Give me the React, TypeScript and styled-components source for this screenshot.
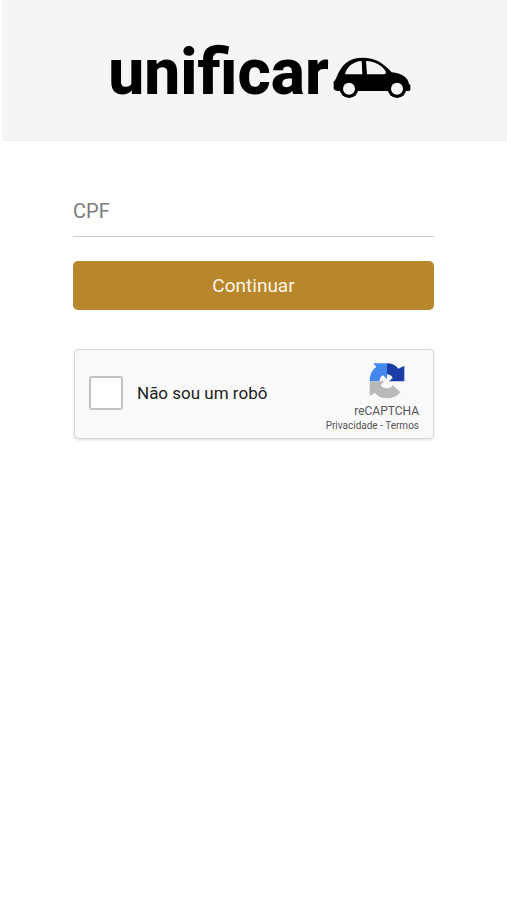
import React, { useState } from "react";
import styled, { createGlobalStyle } from "styled-components";

const GlobalStyle = createGlobalStyle`
  *, *::before, *::after { box-sizing: border-box; }
  body {
    margin: 0;
    background: #fff;
    font-family: Roboto, "Liberation Sans", sans-serif;
  }
`;

const Header = styled.header`
  display: flex;
  align-items: center;
  justify-content: center;
  height: 141px;
  margin-left: 2px;
  padding: 6px 0 0 10px;
  background: #f5f5f5;
  border-bottom: 1px solid #eee;
`;

const Brand = styled.h1`
  display: flex;
  align-items: center;
  gap: 4px;
  margin: 0;
  color: #000;
  font-size: 64px;
  line-height: 76px;
  font-weight: 800;
`;

const CarDrawing = styled.svg`
  width: 78px;
  height: 42px;
  margin-top: 10px;
`;

const Form = styled.form`
  display: flex;
  flex-direction: column;
  max-width: 600px;
  margin: 0 auto;
  padding: 45px 73px;
`;

const CpfInput = styled.input`
  width: 100%;
  height: 51px;
  padding: 0;
  border: 0;
  border-bottom: 1px solid #ccc;
  border-radius: 0;
  outline: 0;
  background: transparent;
  color: #333;
  font-family: inherit;
  font-size: 20px;
  &::placeholder { color: #7c7c7c; opacity: 1; }
  &:focus { border-bottom-color: #b8862b; }
`;

const SubmitButton = styled.button`
  height: 49px;
  margin-top: 24px;
  border: 0;
  border-radius: 5px;
  background: #b8862b;
  color: #fff7e6;
  font-family: inherit;
  font-size: 19px;
  cursor: pointer;
`;

const Captcha = styled.div`
  display: flex;
  align-items: center;
  justify-content: space-between;
  height: 90px;
  margin: 39px 0 0 1px;
  padding: 0 14px;
  background: #f9f9f9;
  border: 1px solid #d8d8d8;
  border-radius: 4px;
  box-shadow: 0 1px 3px rgba(0, 0, 0, 0.12);
`;

const CheckLabel = styled.label`
  display: flex;
  align-items: center;
  gap: 14px;
  color: #222;
  font-size: 17px;
  line-height: 20px;
  padding-bottom: 2px;
`;

const CheckBox = styled.input`
  appearance: none;
  width: 34px;
  height: 34px;
  flex: none;
  margin: 0;
  border: 2px solid #c1c1c1;
  border-radius: 3px;
  background: #fff;
  &:checked { background: #4285f4; border-color: #4285f4; }
`;

const CaptchaBrand = styled.div`
  display: flex;
  flex-direction: column;
  align-items: flex-end;
  padding-top: 4px;
  color: #555;
`;

const CaptchaLogo = styled.svg`
  width: 36px;
  height: 36px;
  margin: 2px 14px 5px 0;
`;

const CaptchaName = styled.span`
  font-size: 12px;
  line-height: 15px;
`;

const CaptchaLinks = styled.span`
  font-size: 10px;
  line-height: 13px;
`;

const CaptchaLink = styled.a`
  color: inherit;
  text-decoration: none;
`;

function Car() {
  return (
    <CarDrawing viewBox="0 0 234 126" aria-hidden="true">
      <path d="M4 73 C12 62 12 53 20 41 C34 15 58 2 88 2 C128 2 151 18 176 46 C206 49 226 62 228 81 L232 84 V98 Q232 102 222 102 H14 Q2 100 2 94 V73 Z" />
      <path d="M36 52 C40 30 61 13 86 12 L88 52 Z M99 12 C128 13 147 26 158 43 C160 50 158 52 152 52 H102 Z" fill="#f5f5f5" />
      <circle cx="48" cy="95" r="28" />
      <circle cx="192" cy="95" r="28" />
      <circle cx="48" cy="95" r="18" fill="#f5f5f5" />
      <circle cx="192" cy="95" r="18" fill="#f5f5f5" />
    </CarDrawing>
  );
}

function RecaptchaMark() {
  return (
    <CaptchaLogo viewBox="20 14 108 108" aria-hidden="true">
      <path fill="#1c3da8" d="M74 15 C88 15 100 20 108 31 L126 22 V69 H80 L91 59 C88 52 82 48 74 48 Z" />
      <path fill="#4388ee" d="M74 15 H33 L42 26 C28 36 22 50 22 69 H52 C52 60 55 54 62 51 L74 62 Z" />
      <path fill="#b9b9b9" d="M22 69 H66 L55 80 C60 87 66 90 75 90 C84 90 88 86 91 80 L114 102 C104 114 90 120 75 120 C58 120 46 114 38 103 L22 113 Z" />
    </CaptchaLogo>
  );
}

export default function App() {
  const [cpf, setCpf] = useState("");
  const [human, setHuman] = useState(false);

  return (
    <>
      <GlobalStyle />
      <Header>
        <Brand>
          unificar
          <Car />
        </Brand>
      </Header>
      <main>
        <Form onSubmit={(event) => event.preventDefault()}>
          <CpfInput
            aria-label="CPF"
            placeholder="CPF"
            inputMode="numeric"
            value={cpf}
            onChange={(event) => setCpf(event.target.value)}
          />
          <SubmitButton type="submit">Continuar</SubmitButton>
          <Captcha>
            <CheckLabel htmlFor="human">
              <CheckBox
                id="human"
                type="checkbox"
                checked={human}
                onChange={(event) => setHuman(event.target.checked)}
              />
              Não sou um robô
            </CheckLabel>
            <CaptchaBrand>
              <RecaptchaMark />
              <CaptchaName>reCAPTCHA</CaptchaName>
              <CaptchaLinks>
                <CaptchaLink href="#privacidade">Privacidade</CaptchaLink>
                {" - "}
                <CaptchaLink href="#termos">Termos</CaptchaLink>
              </CaptchaLinks>
            </CaptchaBrand>
          </Captcha>
        </Form>
      </main>
    </>
  );
}
